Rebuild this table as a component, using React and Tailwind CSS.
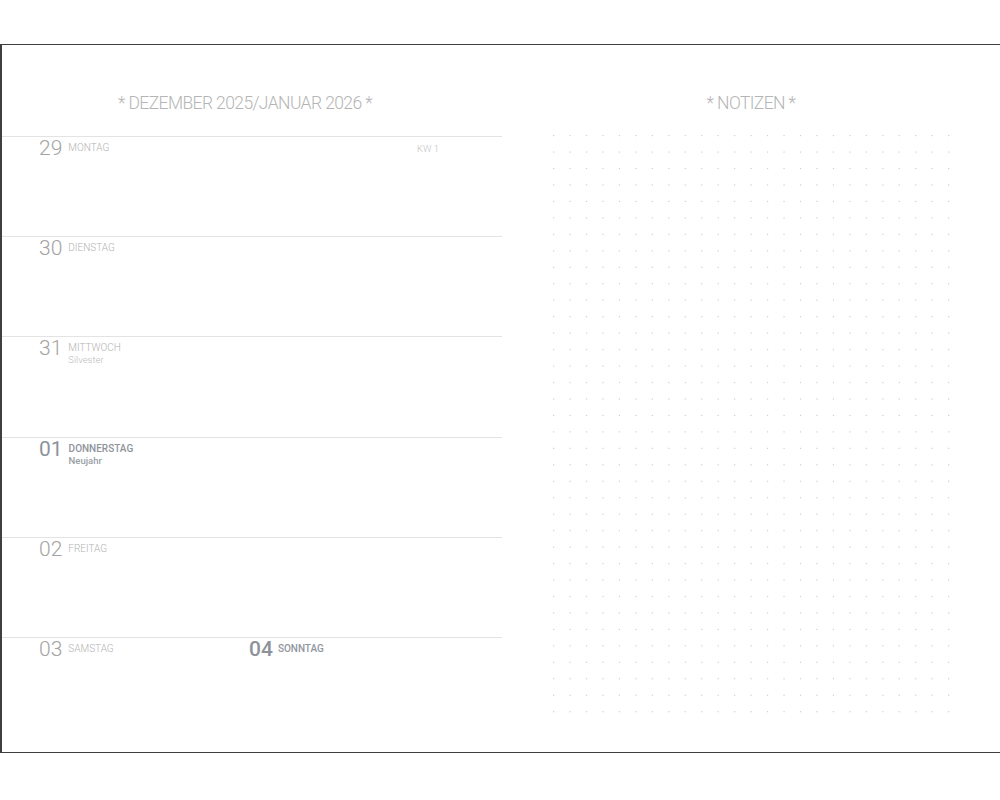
import React from 'react';

const days = [
  { num: '29', name: 'MONTAG', kw: 'KW 1' },
  { num: '30', name: 'DIENSTAG' },
  { num: '31', name: 'MITTWOCH', note: 'Silvester' },
  { num: '01', name: 'DONNERSTAG', note: 'Neujahr', holiday: true },
  { num: '02', name: 'FREITAG' },
];

function Day({ num, name, note, holiday }) {
  return (
    <div className="flex items-start">
      <span
        className={
          holiday
            ? 'text-[21px] leading-[22px] font-normal text-[#8d939b]'
            : 'text-[21px] leading-[22px] font-light text-[#a3a3a3]'
        }
      >
        {num}
      </span>
      <div className="ml-[6px] mt-[5px] flex flex-col">
        <span
          className={
            holiday
              ? 'text-[10px] leading-[11px] font-medium text-[#8f949b]'
              : 'text-[10px] leading-[11px] font-light text-[#b3b3b3]'
          }
        >
          {name}
        </span>
        {note && (
          <span
            className={
              holiday
                ? 'mt-[2px] text-[9.5px] leading-[10px] font-medium text-[#9a9fa6]'
                : 'mt-[2px] text-[9.5px] leading-[10px] font-light text-[#bbbbbb]'
            }
          >
            {note}
          </span>
        )}
      </div>
    </div>
  );
}

function DotGrid() {
  const cols = 25;
  const rows = 36;
  const step = 16.46;
  const dots = [];
  for (let r = 0; r < rows; r++) {
    for (let c = 0; c < cols; c++) {
      dots.push(<rect key={`${r}-${c}`} x={c * step} y={r * step} width="1.2" height="1.2" fill="#cfcfcf" />);
    }
  }
  return (
    <svg width={(cols - 1) * step + 2} height={(rows - 1) * step + 2}>
      {dots}
    </svg>
  );
}

export default function App() {
  return (
    <div className="min-h-screen bg-white pt-[44px] font-['Roboto','Liberation_Sans',sans-serif]">
      <div className="h-[709px] border-t border-b border-l-2 border-[#3f3f3f] flex">
        <div className="w-[500px] flex flex-col">
          <div className="h-[91px] flex items-start justify-center pt-[48px] pr-[14px]">
            <h1 className="text-[17.5px] leading-[20px] font-light tracking-[-0.6px] text-[#b5b5b5]">
              * DEZEMBER 2025/JANUAR 2026 *
            </h1>
          </div>
          {days.map((d) => (
            <div key={d.num} className="h-[100.2px] border-t border-[#e3e3e3] pl-[37px] pr-[63px] flex items-start justify-between">
              <Day {...d} />
              {d.kw && <span className="mt-[7px] text-[9.5px] leading-[10px] font-light text-[#c4c4c4]">{d.kw}</span>}
            </div>
          ))}
          <div className="flex-1 border-t border-[#e3e3e3] pl-[37px] flex items-start">
            <div className="w-[210px]">
              <Day num="03" name="SAMSTAG" />
            </div>
            <div className="flex items-start">
              <span className="text-[21px] leading-[22px] font-medium text-[#8d939b]">04</span>
              <span className="ml-[5px] mt-[5px] text-[10px] leading-[11px] font-medium text-[#91969d]">SONNTAG</span>
            </div>
          </div>
        </div>
        <div className="flex-1 flex flex-col items-center">
          <div className="h-[90px] pt-[48px]">
            <h2 className="text-[17.5px] leading-[20px] font-light tracking-[-0.6px] text-[#b5b5b5]">* NOTIZEN *</h2>
          </div>
          <div className="pl-[2px]">
            <DotGrid />
          </div>
        </div>
      </div>
    </div>
  );
}
